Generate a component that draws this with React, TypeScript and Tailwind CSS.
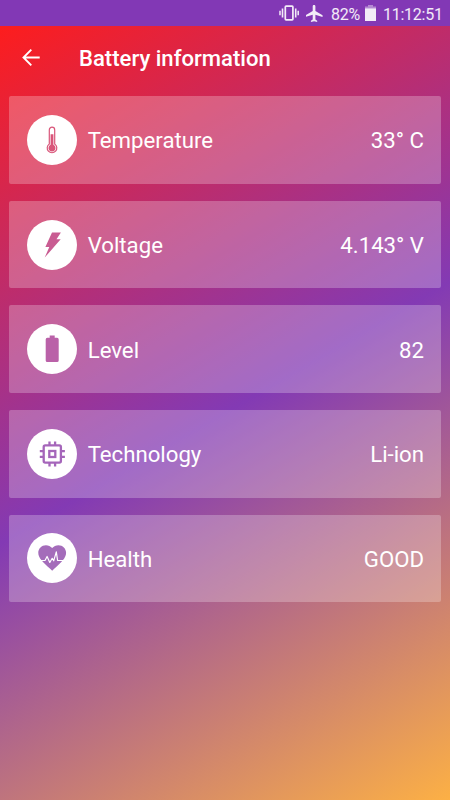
import type { ReactNode } from 'react';

type Row = {
  label: string;
  value: string;
  color: string;
  icon: ReactNode;
};

const rows: Row[] = [
  {
    label: 'Temperature',
    value: '33° C',
    color: 'text-[#d9567a]',
    icon: (
      <>
        <path
          d="M22.300 29V14.900a2.700 2.700 0 0 1 5.400 0V29a4.800 4.800 0 1 1-5.400 0z"
          fill="none"
          stroke="currentColor"
          strokeWidth="1.200"
        />
        <path d="M23.600 19.200h2.800v10.600a3.500 3.500 0 1 1-2.800 0z" />
      </>
    ),
  },
  {
    label: 'Voltage',
    value: '4.143° V',
    color: 'text-[#c95c92]',
    icon: <path d="M25 12.400h8.900l-4.400 6.800h4.200L17.700 37.600l4.600-10.600h-3.900z" />,
  },
  {
    label: 'Level',
    value: '82',
    color: 'text-[#ba61a8]',
    icon: (
      <path d="M22.700 11.600h5v2.200h2.400q1.600 0 1.600 1.600v21.100q0 1.600-1.600 1.600h-9.800q-1.600 0-1.600-1.600V15.400q0-1.600 1.600-1.600h2.400z" />
    ),
  },
  {
    label: 'Technology',
    value: 'Li-ion',
    color: 'text-[#a566ba]',
    icon: (
      <g fill="none" stroke="currentColor" strokeWidth="2.300">
        <rect x="16.700" y="16.400" width="17.200" height="17.200" rx="1.500" />
        <rect x="22.300" y="22" width="6" height="6" />
        <path d="M22.500 12.500v4M28.100 12.500v4M22.500 33.500v4M28.100 33.500v4M12.800 22.200h4M12.800 27.800h4M33.900 22.200h4M33.900 27.800h4" />
      </g>
    ),
  },
  {
    label: 'Health',
    value: 'GOOD',
    color: 'text-[#a46cba]',
    icon: (
      <>
        <path
          transform="translate(8.500 8) scale(1.390)"
          d="M12 21.350l-1.450-1.320C5.400 15.360 2 12.280 2 8.500 2 5.420 4.420 3 7.500 3c1.740 0 3.410.81 4.500 2.090C13.090 3.810 14.760 3 16.500 3 19.580 3 22 5.420 22 8.500c0 3.780-3.400 6.860-8.550 11.540L12 21.350z"
        />
        <path
          d="M14 27.500h4l2.100-4 2.700 6 2.400-4.200 1.500 2.500 2.600-9 1.300 8.700h6"
          fill="none"
          stroke="white"
          strokeWidth="1.200"
          strokeLinejoin="round"
        />
      </>
    ),
  },
];

function StatusBar() {
  return (
    <div className="flex h-[26px] items-center justify-end bg-[#8238b5] pr-[8px] leading-none text-white/90">
      {/* Vibrate */}
      <svg className="mr-[7px] h-4 w-5" viewBox="0 0 20 16" fill="none" stroke="currentColor">
        <rect x="6.300" y="1.200" width="7.600" height="13.600" rx="0.800" strokeWidth="1.700" />
        <path d="M3.500 3.500v9M16.700 3.500v9" strokeWidth="1.600" />
        <path d="M1 5.700v4.600M19.200 5.700v4.600" strokeWidth="1.500" />
      </svg>
      {/* Airplane mode */}
      <svg className="mr-[8px] h-[17px] w-[17px]" viewBox="2.500 2 19 20" preserveAspectRatio="none" fill="currentColor">
        <path d="M21 16v-2l-8-5V3.500c0-.83-.67-1.500-1.500-1.500S10 2.670 10 3.500V9l-8 5v2l8-2.500V19l-2 1.500V22l3.500-1 3.500 1v-1.500L13 19v-5.500l8 2.500z" />
      </svg>
      <span className="mt-[3px] w-[30px] whitespace-nowrap text-[16px] tracking-[-0.300px]">82%</span>
      <svg className="ml-[4px] h-4 w-[11px]" viewBox="0 0 11 16" fill="currentColor">
        <path d="M3 0h5v1.500h3V4H0V1.500h3z" opacity="0.450" />
        <path d="M0 3.500h11V16H0z" />
      </svg>
      <span className="ml-[7px] mt-[3px] w-[59px] whitespace-nowrap text-[16px] tracking-[-0.250px]">11:12:51</span>
    </div>
  );
}

function InfoCard({ label, value, color, icon }: Row) {
  return (
    <div className="flex h-[87.600px] items-center rounded-[2px] bg-white/25 pl-[18.400px] pr-[17px] text-[22.200px] text-white">
      <div className={`h-[50px] w-[50px] shrink-0 rounded-full bg-white ${color}`}>
        <svg className="h-full w-full" viewBox="0 0 50 50" fill="currentColor">
          {icon}
        </svg>
      </div>
      <span className="ml-[10.300px] mt-[2px]">{label}</span>
      <span className="ml-auto mt-[2px]">{value}</span>
    </div>
  );
}

export default function App() {
  return (
    <div className="flex h-[800px] w-[450px] flex-col overflow-hidden font-['Roboto',sans-serif]">
      <StatusBar />
      <main className="flex-1 bg-[linear-gradient(149.830deg,#fd1d1d,#833ab4_50%,#fcb045)]">
        <header className="flex h-[70.300px] items-center pb-[7px] pl-[22px] text-white">
          <svg className="h-[18px] w-[18px]" viewBox="0 0 18 18" fill="none" stroke="currentColor" strokeWidth="1.900">
            <path d="M17.700 8.500H1.300M9.300 0.700L1.500 8.500l7.800 7.800" />
          </svg>
          <h1 className="ml-[39px] mt-px text-[22.100px] font-medium">Battery information</h1>
        </header>
        <section className="flex flex-col gap-[17px] px-[9px]">
          {rows.map((row) => (
            <InfoCard key={row.label} {...row} />
          ))}
        </section>
      </main>
    </div>
  );
}
